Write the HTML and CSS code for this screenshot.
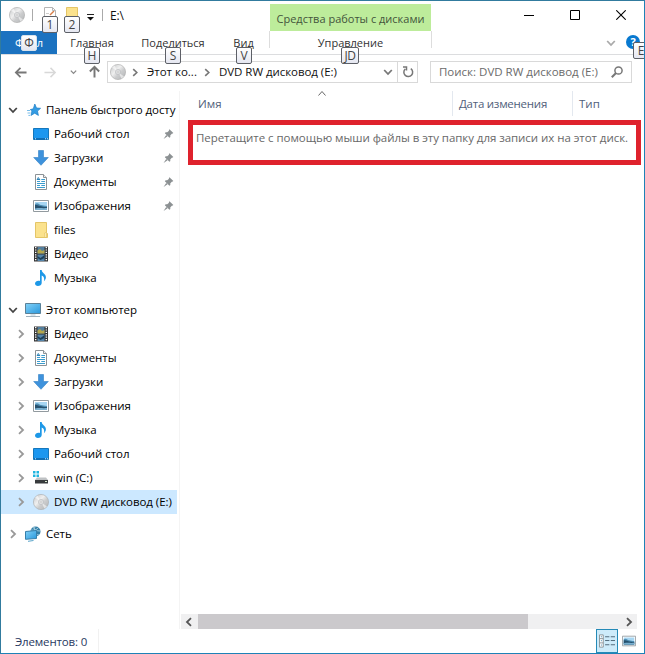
FILE: index.html
```html
<!DOCTYPE html>
<html lang="ru">
<head>
<meta charset="utf-8">
<title>E:\</title>
<link rel="stylesheet" href="styles.css">
</head>
<body>
<svg class="defs" aria-hidden="true">
  <defs>
    <linearGradient id="g-disc" x1="0" y1="0" x2="1" y2="1"><stop offset="0" stop-color="#c2c4c6"/><stop offset=".4" stop-color="#efefef"/><stop offset=".6" stop-color="#cccdce"/><stop offset="1" stop-color="#b1b3b5"/></linearGradient>
    <linearGradient id="g-screen" x1="0" y1="0" x2="1" y2="1"><stop offset="0" stop-color="#83d2f8"/><stop offset="1" stop-color="#2997dc"/></linearGradient>
    <symbol id="disc" viewBox="0 0 16 16"><circle cx="8" cy="8" r="7.6" fill="url(#g-disc)" stroke="#aaa" stroke-width=".6"/><path d="M8 8 2 3.5 4.5 1.4zM8 8l6 4.5-2.5 2z" fill="#fff" opacity=".55"/><circle cx="8" cy="8" r="2.6" fill="#e4e6e7" stroke="#b4b6b8" stroke-width=".6"/><circle cx="8" cy="8" r="1" fill="#fff" stroke="#a5a5a5" stroke-width=".5"/></symbol>
    <symbol id="star" viewBox="0 0 16 16"><path d="m8.8 2 1.7 4 4.1.3-3.1 2.8.9 4.3-3.7-2.2-3.6 2.2.8-4.3-1.600-1.500 3-.8z" fill="#349ce3" stroke="#1b7dc6" stroke-width=".7"/><path d="M1 8.500h3M1.500 11h3M2.400 13.400h2" stroke="#79bde9"/></symbol>
    <symbol id="desktop" viewBox="0 0 16 16"><path d="M.5 2.500h15v11H.5z" fill="#1c97f0" stroke="#1577bc"/><path d="M1 12.800h14" stroke="#0b5d9e"/><path d="M2 12.800h1m9 0h1m1 0h1" stroke="#d5efff"/></symbol>
    <symbol id="down" viewBox="0 0 16 16"><path d="M5.500.5h5v7h4.800L8 15.300.7 7.500h4.800z" fill="#3e92dc" stroke="#317fc5" stroke-width=".6"/></symbol>
    <symbol id="doc" viewBox="0 0 16 16"><path d="M2.500.5h8l3 3v12h-11z" fill="#fff" stroke="#8c9296"/><path d="M10.500.5v3h3" fill="#eee" stroke="#8c9296"/><path d="M4 7.500h3M8.300 5.500H12M8.300 7.500H12M4 9.500h8M4 11.500h3M8.300 11.500H12M4 13.500h8" stroke="#3b9cce"/><path d="m4 6 1.300-2.500L7 6.100M4 5.500h3" fill="none" stroke="#2b83b8"/></symbol>
    <symbol id="picture" viewBox="0 0 16 16"><path d="M.5 2.500h15v11H.5z" fill="#fff" stroke="#929a9f"/><path d="M2 4h12v8H2z" fill="#a7d6f2"/><path d="M2 6c3-2 4 1 6 1s3 1 6 1v4H2z" fill="#4f8eb3"/><path d="M2 7c4 0 6 2 12 2v3H2z" fill="#26516e"/><path d="M2 10.500c5-1 7 0 12-.5v2H2z" fill="#78afcf"/></symbol>
    <symbol id="folder" viewBox="0 0 16 16"><path d="M2.500.5h11v10l1 1v4h-12z" fill="#fbe28d" stroke="#e4c567"/><path d="M11.700 15v-4l1.800-1v5" fill="#fff0b8" stroke="#e0be5d" stroke-width=".6"/></symbol>
    <symbol id="video" viewBox="0 0 16 16"><path d="M1 .5h14v15H1z" fill="#343434"/><path d="M4.500 1h7v6.500h-7z" fill="#537e9d"/><path d="M4.500 4.500 7 3l2 2 2.500-1v3.500h-7z" fill="#b3a64c"/><path d="M4.500 8.500h7V15h-7z" fill="#5685aa"/><path d="m4.500 10 3 2 4-3v3l-4 2-3-2z" fill="#1d4059"/><path d="M2.700 1v14M13.300 1v14" stroke="#fff" stroke-width="1.400" stroke-dasharray="1.200 1.200"/></symbol>
    <symbol id="music" viewBox="0 0 16 16"><path d="M7 0h1.700c.2 3.600 4.200 3.400 4.200 7.200 0 1.700-1 3.100-2 4 .9-3-.2-4.800-2.200-5.700V13c0 1.700-1.700 3-3.800 3C3.200 16 2 15 2 13.600 2 12 3.700 10.800 5.500 10.800c.6 0 1 .1 1.500.3z" fill="#1d98e7"/></symbol>
    <symbol id="pc" viewBox="0 0 16 16"><path d="M.5 1.500h15v10H.5z" fill="url(#g-screen)" stroke="#5b8198"/><path d="M5.500 12h5v2h-5z" fill="#d6e2e9"/><path d="M1 14.500h14" stroke="#a1b1bc"/></symbol>
    <symbol id="drive" viewBox="0 0 16 16"><path d="M0 1h2.500v2.500H0zM3.500 1H6v2.500H3.500zM0 4.500h2.500V7H0zM3.500 4.500H6V7H3.500z" fill="#20b5df"/><path d="M2 10 4 7.500h9L15 10z" fill="#bfc2c4"/><path d="M2 10h13v3.500H2z" fill="#383b3d"/><path d="M12 11.500h2" stroke="#d6e9ce"/></symbol>
    <symbol id="network" viewBox="0 0 16 16"><circle cx="10.500" cy="5.500" r="5" fill="#347fa8"/><path d="M6 4c4 1 6-1 7-2M8 1c1 3 4 4 7 4M10 .7C8 5 11 9 14 9" fill="none" stroke="#a9d1e2" stroke-width=".9"/><path d="m.5 5.500 11-1v8l-11 .8z" fill="url(#g-screen)" stroke="#367fab"/><path d="M3 15.300 8.500 14.500" stroke="#58a3c9"/></symbol>
    <symbol id="pin" viewBox="0 0 12 12"><path d="m7 .7 4.300 4.300-1.200.7-.5-.1-1.700 2 .1 1.700-1 .8-5-5 .9-1 1.700.1 2-1.700-.3-.6zM3.500 7 .6 11.400 5 8.500z" fill="#8c9193"/></symbol>
    <symbol id="chev-r" viewBox="0 0 8 10"><path d="m2 1.200 4 3.800-4 3.800" fill="none" stroke="currentColor" stroke-width="1.800"/></symbol>
    <symbol id="chev-d" viewBox="0 0 10 8"><path d="m1.200 2 3.800 4 3.800-4" fill="none" stroke="currentColor" stroke-width="1.800"/></symbol>
  </defs>
</svg>
<div class="window">
  <header class="titlebar">
    <div class="quick">
      <svg class="ico"><use href="#disc"/></svg>
      <i class="sep"></i>
      <span class="tool props"><svg class="ico" viewBox="0 0 16 16"><path d="M2.500.5h8l3 3v12h-11z" fill="#fff" stroke="#b5b5b5"/><path d="m8 8 4-4" fill="none" stroke="#d77e48" stroke-width="1.500"/><path d="M4 6.500h3" stroke="#ccc"/><path d="M10.500.5v3h3" fill="none" stroke="#b5b5b5"/></svg><kbd class="tip">1</kbd></span>
      <span class="tool"><svg class="ico"><use href="#folder"/></svg><kbd class="tip">2</kbd></span>
      <svg class="menu-mark" viewBox="0 0 7 7"><path d="M0 .5h7" stroke="#222"/><path d="M0 3h7L3.500 6.500z" fill="#111"/></svg>
      <i class="sep"></i>
      <span class="title">E:\</span>
    </div>
    <div class="context">Средства работы с дисками</div>
    <div class="controls">
      <svg viewBox="0 0 10 10"><path d="M0 5.500h10" stroke="#000"/></svg>
      <svg viewBox="0 0 10 10"><path d="M.5.500h9v9h-9z" fill="none" stroke="#000"/></svg>
      <svg viewBox="0 0 10 10"><path d="m.3.300 9.400 9.400m0-9.400L.3 9.700" stroke="#000" stroke-width="1.100"/></svg>
    </div>
  </header>
  <nav class="tabs">
    <div class="tab file"><span>Файл</span><kbd class="tip">Ф</kbd></div>
    <div class="tab home"><span>Главная</span><kbd class="tip">H</kbd></div>
    <div class="tab share"><span>Поделиться</span><kbd class="tip">S</kbd></div>
    <div class="tab view"><span>Вид</span><kbd class="tip">V</kbd></div>
    <div class="tab manage"><span>Управление</span><kbd class="tip wide">JD</kbd></div>
    <div class="help">
      <svg class="collapse"><use href="#chev-d"/></svg>
      <span class="question">?<kbd class="tip">E</kbd></span>
    </div>
  </nav>
  <div class="addressbar">
    <svg class="arrow" viewBox="0 0 14 14"><path d="M13.500 7H2m5-5L2 7l5 5" fill="none" stroke="#777" stroke-width="1.900"/></svg>
    <svg class="arrow next" viewBox="0 0 14 14"><path d="M.5 7H12M7 2l5 5-5 5" fill="none" stroke="#d8d8d8" stroke-width="1.600"/></svg>
    <svg class="recent"><use href="#chev-d"/></svg>
    <svg class="arrow up" viewBox="0 0 14 14"><path d="M7 13.500V2M2 7l5-5 5 5" fill="none" stroke="#777" stroke-width="2.100"/></svg>
    <div class="path">
      <svg class="ico"><use href="#disc"/></svg>
      <svg class="crumb"><use href="#chev-r"/></svg>
      <span class="parent">Этот ко...</span>
      <svg class="crumb"><use href="#chev-r"/></svg>
      <span class="current">DVD RW дисковод (E:)</span>
      <svg class="open"><use href="#chev-d"/></svg>
      <span class="refresh"><svg viewBox="0 0 12 12"><path d="M8.800 2.600A4.400 4.400 0 1 1 3.200 3M1 1h3.500v3.500" fill="none" stroke="#777" stroke-width="1.500"/></svg></span>
    </div>
    <div class="search"><span>Поиск: DVD RW дисковод (E:)</span><svg viewBox="0 0 12 12"><circle cx="7.500" cy="4.500" r="3.600" fill="none" stroke="#777" stroke-width="1.500"/><path d="M5 7 .8 11.200" stroke="#777" stroke-width="2"/></svg></div>
  </div>
  <main class="body">
    <aside class="tree">
      <div class="row root quickroot"><svg class="twist"><use href="#chev-d"/></svg><svg class="ico"><use href="#star"/></svg><span>Панель быстрого досту</span></div>
      <div class="row"><svg class="ico"><use href="#desktop"/></svg><span>Рабочий стол</span><svg class="pin"><use href="#pin"/></svg></div>
      <div class="row"><svg class="ico"><use href="#down"/></svg><span>Загрузки</span><svg class="pin"><use href="#pin"/></svg></div>
      <div class="row"><svg class="ico"><use href="#doc"/></svg><span>Документы</span><svg class="pin"><use href="#pin"/></svg></div>
      <div class="row"><svg class="ico"><use href="#picture"/></svg><span>Изображения</span><svg class="pin"><use href="#pin"/></svg></div>
      <div class="row"><svg class="ico"><use href="#folder"/></svg><span>files</span></div>
      <div class="row"><svg class="ico"><use href="#video"/></svg><span>Видео</span></div>
      <div class="row"><svg class="ico"><use href="#music"/></svg><span>Музыка</span></div>
      <div class="row root group"><svg class="twist"><use href="#chev-d"/></svg><svg class="ico"><use href="#pc"/></svg><span>Этот компьютер</span></div>
      <div class="row"><svg class="branch"><use href="#chev-r"/></svg><svg class="ico"><use href="#video"/></svg><span>Видео</span></div>
      <div class="row"><svg class="branch"><use href="#chev-r"/></svg><svg class="ico"><use href="#doc"/></svg><span>Документы</span></div>
      <div class="row"><svg class="branch"><use href="#chev-r"/></svg><svg class="ico"><use href="#down"/></svg><span>Загрузки</span></div>
      <div class="row"><svg class="branch"><use href="#chev-r"/></svg><svg class="ico"><use href="#picture"/></svg><span>Изображения</span></div>
      <div class="row"><svg class="branch"><use href="#chev-r"/></svg><svg class="ico"><use href="#music"/></svg><span>Музыка</span></div>
      <div class="row"><svg class="branch"><use href="#chev-r"/></svg><svg class="ico"><use href="#desktop"/></svg><span>Рабочий стол</span></div>
      <div class="row"><svg class="branch"><use href="#chev-r"/></svg><svg class="ico"><use href="#drive"/></svg><span>win (C:)</span></div>
      <div class="row selected"><svg class="branch"><use href="#chev-r"/></svg><svg class="ico"><use href="#disc"/></svg><span>DVD RW дисковод (E:)</span></div>
      <div class="row root net"><svg class="branch"><use href="#chev-r"/></svg><svg class="ico"><use href="#network"/></svg><span>Сеть</span></div>
    </aside>
    <section class="files">
      <div class="columns">
        <div class="col name">Имя<svg class="sort" viewBox="0 0 8 5"><path d="m.5 4.500 3.500-4 3.500 4" fill="none" stroke="#666"/></svg></div>
        <div class="col date">Дата изменения</div>
        <div class="col">Тип</div>
      </div>
      <div class="notice"><span>Перетащите с помощью мыши файлы в эту папку для записи их на этот диск.</span></div>
      <div class="scrollbar"><svg class="flip"><use href="#chev-r"/></svg><i class="thumb"></i><svg><use href="#chev-r"/></svg></div>
    </section>
  </main>
  <footer class="status">
    <span class="count">Элементов: 0</span>
    <div class="views">
      <span class="viewbtn active"><svg viewBox="0 0 17 14"><path d="M.5.500h4v13h-4zM.5 4.500h4M.5 9h4" fill="#fff" stroke="#8a9296"/><path d="M2 2.500h1M2 6.700h1M2 11.300h1" stroke="#347da5"/><path d="M6.500 2.500H11M12.500 2.500H17M6.500 6.500H11M12.500 6.500H17M6.500 11H11M12.500 11H17" stroke="#4c6474"/></svg></span>
      <span class="viewbtn"><svg class="thumbs"><use href="#picture"/></svg></span>
    </div>
  </footer>
</div>
</body>
</html>
```

FILE: styles.css
```css
* { box-sizing: border-box; }
body { margin: 0; background: #fff; font: 11.5px/16px "Open Sans", "Noto Sans", sans-serif; color: #111; }
svg { display: block; flex: none; }
span { white-space: nowrap; }
.defs { position: absolute; width: 0; height: 0; }
.window { width: 645px; height: 654px; display: flex; flex-direction: column; border: 1px solid #1e82b7; border-left-color: #317b9e; border-top-color: #317b9e; overflow: hidden; background: #fff; }
.ico { width: 16px; height: 16px; }
.tip { position: absolute; width: 16px; height: 17px; border: 1px solid #5d6067; border-radius: 2px; background: linear-gradient(#fff, #e5e7f1); color: #444; font: 12px/15px "Open Sans", sans-serif; text-align: center; z-index: 3; }
.tip.wide { width: 18px; letter-spacing: -.4px; }

.titlebar { height: 30px; display: flex; }
.quick { width: 269px; display: flex; align-items: center; padding: 0 0 2px 8px; }
.sep { width: 1px; height: 12px; margin-left: 7px; background: #aaa; }
.tool { position: relative; margin-left: 6px; }
.tool.props { margin-left: 9px; }
.tool .tip { left: 0; top: 9px; }
.menu-mark { width: 7px; height: 7px; margin: 4px 1px 0 7px; }
.title { margin-left: 7px; font-size: 12px; letter-spacing: -.2px; padding-top: 2px; }
.context { width: 161px; height: 27px; margin-top: 3px; background: #bdec9b; color: #43543b; text-align: center; font-size: 11px; line-height: 29px; white-space: nowrap; }
.controls { margin-left: auto; display: flex; gap: 36px; padding: 9px 18px 0 0; }
.controls svg { width: 10px; height: 10px; }

.tabs { height: 24px; display: flex; border-bottom: 1px solid #dcdddf; color: #333; font-size: 11px; }
.tab { position: relative; text-align: center; line-height: 24px; }
.file { width: 56px; background: #1b72c0; color: #fff; height: 23px; }
.file .tip { left: 20px; top: 4px; border-color: #d8e2ec; height: 16px; line-height: 14px; }
.home { width: 70px; }
.share { width: 92px; }
.view { width: 49px; }
.manage { width: 163px; margin-left: 1px; border: solid #ddd; border-width: 0 1px; height: 17px; }
.home .tip, .share .tip, .view .tip, .manage .tip { top: 16px; }
.home .tip { left: 27px; }
.share .tip { left: 38px; }
.view .tip { left: 17px; }
.manage .tip { left: 71px; }
.help { flex: 1; display: flex; align-items: flex-start; justify-content: flex-end; padding-top: 4px; }
.collapse { width: 10px; height: 8px; color: #aaa; margin: 4px 10px 0 0; }
.question { position: relative; width: 14px; height: 14px; margin-right: 4px; border-radius: 50%; background: #0879d0; color: #fff; font-weight: bold; text-align: center; line-height: 14px; }
.question .tip { left: 7px; top: 7px; }

.addressbar { height: 36px; display: flex; align-items: flex-start; padding: 6px 0 0 13px; }
.arrow { width: 13px; height: 13px; margin-top: 5px; }
.next { margin-left: 17px; }
.recent { width: 7px; height: 6px; margin: 8px 0 0 13px; color: #888; }
.up { margin: 4px 0 0 11px; }
.path { width: 311px; height: 22px; display: flex; align-items: center; margin-left: 6px; border: 1px solid #d9d9d9; padding-left: 2px; }
.crumb { width: 8px; height: 9px; margin: 0 0 0 5px; color: #777; }
.parent { margin-left: 8px; width: 51px; }
.current { margin-left: 8px; letter-spacing: -.05px; }
.open { width: 10px; height: 8px; margin-left: auto; color: #777; margin-right: 4px; }
.refresh { width: 20px; height: 20px; border-left: 1px solid #d9d9d9; display: grid; place-items: center; }
.refresh svg { width: 12px; height: 12px; }
.search { width: 202px; height: 22px; margin-left: 12px; display: flex; align-items: center; justify-content: space-between; border: 1px solid #d9d9d9; padding: 0 8px; color: #6b6b6b; }
.search svg { width: 12px; height: 12px; }

.body { flex: 1; display: flex; min-height: 0; }
.tree { width: 179px; padding-top: 7px; border-right: 1px solid #f4f4f4; color: #000; }
.row { position: relative; display: flex; align-items: center; height: 24px; width: 176px; padding-left: 32px; gap: 5px; letter-spacing: -.05px; }
.row.root { padding-left: 24px; gap: 5px; }
.row.quickroot { padding-left: 25px; gap: 4px; }
.group, .net { margin-top: 8px; }
.selected { background: #cce8ff; }
.twist { position: absolute; left: 7px; top: 8px; width: 10px; height: 8px; color: #444; }
.branch { position: absolute; left: 16px; top: 7px; width: 8px; height: 10px; color: #999; }
.net .branch { left: 8px; }
.pin { width: 11px; height: 12px; margin-left: auto; margin-right: 3px; }

.files { flex: 1; min-width: 0; display: flex; flex-direction: column; }
.columns { display: flex; height: 25px; color: #50607a; line-height: 25px; }
.col { padding-left: 6px; border-left: 1px solid #e3e8ef; }
.name { position: relative; width: 272px; padding-left: 18px; border-left: 0; }
.date { width: 120px; letter-spacing: -.25px; }
.sort { position: absolute; left: 138px; top: 0; width: 8px; height: 5px; }
.notice { height: 45px; width: 453px; margin: 4px 0 0 8px; border: 5px solid #df222d; padding: 5px 3px; color: #686868; letter-spacing: -.05px; }
.scrollbar { margin: auto 1px 0 1px; width: 456px; height: 15px; background: #f0f0f1; color: #555; display: flex; align-items: center; padding: 0 4px; }
.scrollbar svg { width: 8px; height: 10px; }
.scrollbar .flip { transform: scaleX(-1); }
.thumb { width: 330px; height: 15px; background: #cbc9cc; margin: 0 auto 0 5px; }

.status { height: 24px; display: flex; justify-content: space-between; padding-left: 14px; }
.count { color: #28395f; line-height: 25px; width: 84px; border-right: 1px solid #f1f1f1; letter-spacing: -.15px; }
.views { display: flex; padding-right: 4px; }
.viewbtn { width: 22px; height: 24px; display: grid; place-items: center; border: 1px solid transparent; }
.viewbtn.active { background: #cdebfa; border-color: #258ab7; }
.viewbtn svg { width: 16px; height: 14px; }
.viewbtn .thumbs { width: 14px; height: 14px; }
```
